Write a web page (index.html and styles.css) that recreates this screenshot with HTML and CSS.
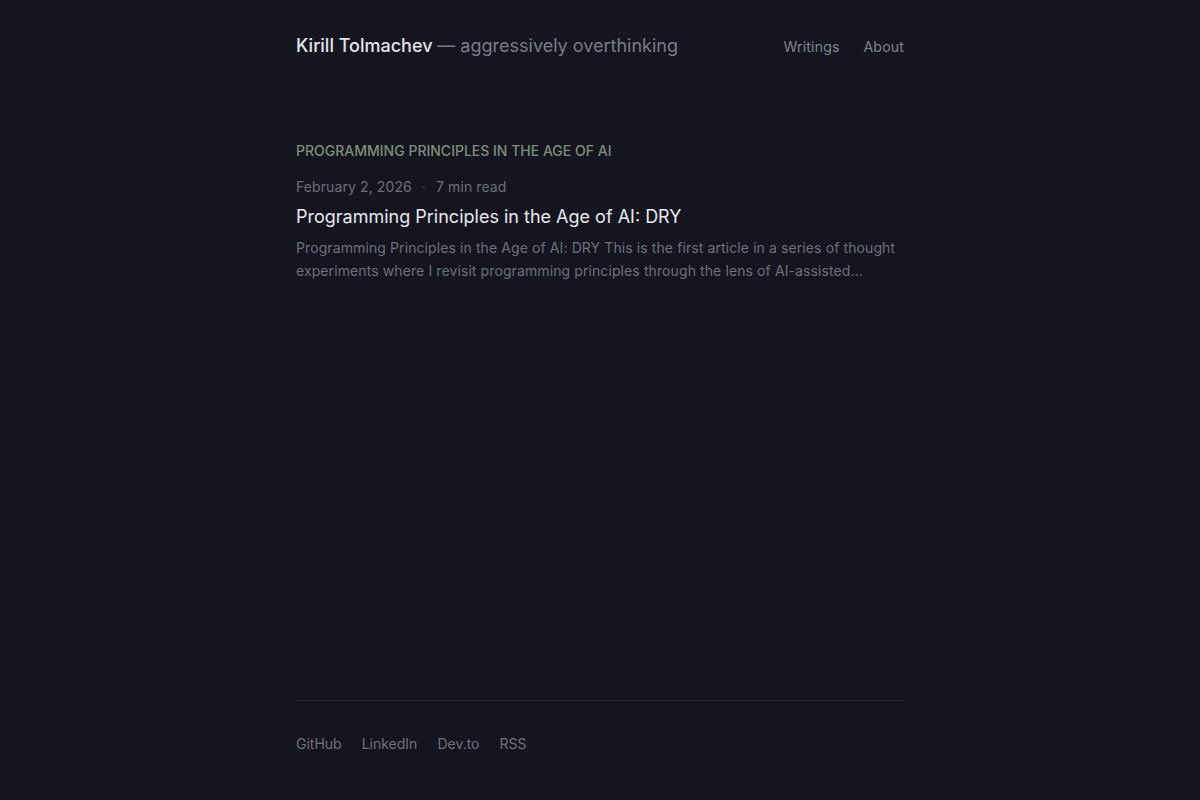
FILE: index.html
```html
<!DOCTYPE html>
<html lang="en">
  <head>
    <meta charset="UTF-8" />
    <meta name="viewport" content="width=device-width, initial-scale=1.0" />
    <title>Kirill Tolmachev</title>
    <link rel="stylesheet" href="styles.css">
  </head>
  <body>
    <div class="page">
      <header class="site-header">
        <a class="brand" href="#">Kirill Tolmachev <span class="tagline">— aggressively overthinking</span></a>
        <nav class="nav">
          <a href="#">Writings</a>
          <a href="#">About</a>
        </nav>
      </header>

      <main class="content">
        <section class="series">
          <h2 class="series-title">Programming Principles in the Age of AI</h2>
          <article class="post">
            <div class="post-meta">
              <span>February 2, 2026</span>
              <span class="dot">·</span>
              <span>7 min read</span>
            </div>
            <h3 class="post-title"><a href="#">Programming Principles in the Age of AI: DRY</a></h3>
            <p class="post-excerpt">Programming Principles in the Age of AI: DRY This is the first article in a series of thought experiments where I revisit programming principles through the lens of AI-assisted...</p>
          </article>
        </section>
      </main>

      <footer class="site-footer">
        <a href="#">GitHub</a>
        <a href="#">LinkedIn</a>
        <a href="#">Dev.to</a>
        <a href="#">RSS</a>
      </footer>
    </div>
  </body>
</html>
```

FILE: styles.css
```css
body {
  margin: 0;
  background-color: #15151f;
  color: #e6e6ec;
  font-family: Inter, "Noto Sans", sans-serif;
}

a {
  color: inherit;
  text-decoration: none;
}

.page {
  width: 608px;
  margin: 0 auto;
  min-height: 100vh;
  display: flex;
  flex-direction: column;
}

.site-header {
  display: flex;
  justify-content: space-between;
  align-items: center;
  padding-top: 32px;
  height: 28px;
}

.brand {
  font-size: 18px;
  line-height: 28px;
  font-weight: 500;
  color: #e4e4ea;
}

.tagline {
  font-weight: 400;
  color: #7b7b88;
}

.nav {
  display: flex;
  gap: 24px;
  font-size: 14px;
  letter-spacing: 0.2px;
  color: #85858f;
}

.content {
  flex: 1;
  padding-top: 81px;
}

.series-title {
  margin: 0 0 16px;
  font-size: 14px;
  line-height: 20px;
  font-weight: 500;
  text-transform: uppercase;
  color: #7d8f7b;
}

.post-meta {
  display: flex;
  gap: 10px;
  font-size: 14px;
  line-height: 20px;
  letter-spacing: 0.1px;
  color: #6e6e7a;
}

.dot {
  color: #4a4a56;
}

.post-title {
  margin: 6px 0 5px;
  font-size: 18px;
  line-height: 28px;
  font-weight: 400;
  color: #e8e8ee;
}

.post-excerpt {
  margin: 0;
  font-size: 14px;
  line-height: 23px;
  letter-spacing: 0.1px;
  color: #6f6f7b;
}

.site-footer {
  border-top: 1px solid #25252f;
  padding: 33px 0 46px;
  display: flex;
  gap: 20px;
  font-size: 14px;
  line-height: 20px;
  color: #70707c;
}
```
